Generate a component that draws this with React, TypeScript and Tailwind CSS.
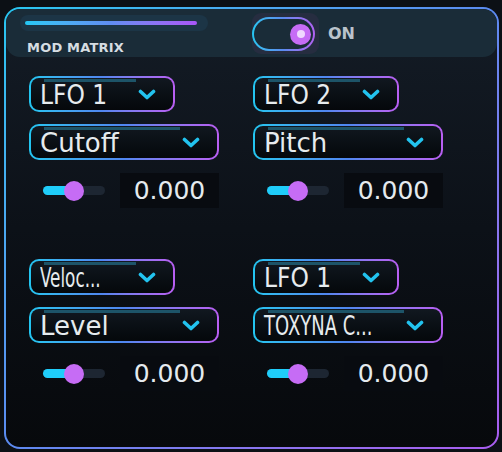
import React from 'react';

type Slot = {
  source: string;
  target: string;
  sourceFit?: string;
  targetFit?: string;
  value: string;
};

// Labels that don't fit get squeezed horizontally, like a fitted-text draw.
const slots: Slot[][] = [
  [
    { source: 'LFO 1', target: 'Cutoff', value: '0.000' },
    { source: 'Veloc...', target: 'Level', sourceFit: 'scale-x-[0.72]', value: '0.000' },
  ],
  [
    { source: 'LFO 2', target: 'Pitch', value: '0.000' },
    { source: 'LFO 1', target: 'TOXYNA C...', targetFit: 'scale-x-[0.77]', value: '0.000' },
  ],
];

const Chevron: React.FC = () => (
  <svg width="18" height="11" viewBox="0 0 18 11" fill="none" className="shrink-0 ml-auto">
    <polyline
      points="2.5,2.5 9,8.5 15.5,2.5"
      stroke="#22c3ef"
      strokeWidth="3.6"
      strokeLinecap="round"
      strokeLinejoin="round"
    />
  </svg>
);

const Select: React.FC<{ label: string; wide?: boolean; fit?: string }> = ({ label, wide, fit }) => (
  <div
    className={`h-[36px] p-[2px] rounded-[10px] bg-gradient-to-r from-[#22c5f0] via-[#4f86f0] to-[#b85ef2] ${
      wide ? 'w-[190px]' : 'w-[146px]'
    }`}
  >
    <div className="relative h-full rounded-[8px] bg-gradient-to-b from-[#111820] to-[#05080b] flex items-center pl-[9px] pr-[17px]">
      <div className="absolute top-[1px] left-[13px] right-[37px] h-[3px] bg-[#1d5468]" />
      <span
        className={`text-[26px] leading-[26px] pt-[1px] text-[#e6ebee] whitespace-nowrap origin-left ${
          wide && !fit
            ? "font-['DejaVu_Sans',sans-serif]"
            : "font-['DejaVu_Sans_Condensed','DejaVu_Sans',sans-serif] font-stretch-condensed"
        } ${fit ?? ''}`}
      >
        {label}
      </span>
      <Chevron />
    </div>
  </div>
);

const AmountRow: React.FC<{ value: string; pos: number }> = ({ value, pos }) => (
  <div className="h-[35px] flex items-center">
    <div className="relative ml-[14px] w-[62px] h-[9px] rounded-full bg-[#1d2632]">
      <div className="h-full rounded-full bg-[#1fcdfa]" style={{ width: pos }} />
      <div
        className="absolute top-1/2 w-[20px] h-[20px] -mt-[10px] -ml-[10px] rounded-full bg-[#c66cf5]"
        style={{ left: pos }}
      />
    </div>
    <div className="ml-[15px] w-[99px] h-[35px] bg-[#080b10] flex items-center justify-center">
      <span className="text-[25px] leading-none text-[#e4eaee] font-['DejaVu_Sans',sans-serif]">{value}</span>
    </div>
  </div>
);

const SlotGroup: React.FC<{ slot: Slot }> = ({ slot }) => (
  <div className="flex flex-col">
    <Select label={slot.source} fit={slot.sourceFit} />
    <div className="mt-[12px]">
      <Select label={slot.target} wide fit={slot.targetFit} />
    </div>
    <div className="mt-[13px]">
      <AmountRow value={slot.value} pos={31} />
    </div>
  </div>
);

export default function App() {
  return (
    <div className="w-[502px] h-[452px] bg-[#0c1015] pt-[7px] pl-[4px] font-['DejaVu_Sans',sans-serif]">
      <div className="w-[495px] h-[442px] p-[2px] rounded-[16px] bg-gradient-to-br from-[#26c6f0] via-[#5b8af0] to-[#a95cf0]">
        <div className="h-full rounded-[14px] bg-gradient-to-b from-[#141c26] via-[#0c1118] to-[#07090c] flex flex-col overflow-hidden">
          {/* header */}
          <div className="h-[48px] shrink-0 rounded-[14px] bg-[#1a2c38] flex items-start px-[14px]">
            <div className="w-[188px]">
              <div className="mt-[6px] h-[16px] rounded-full bg-[#1c3546] flex items-center pl-[5px] pr-[11px]">
                <div className="h-[4px] w-full rounded-full bg-gradient-to-r from-[#22c8f5] via-[#5f8df2] to-[#a855f7]" />
              </div>
              <div className="mt-[9px] pl-[7px] text-[13px] leading-[16px] font-bold text-[#d6dde2] tracking-[0.2px]">
                MOD MATRIX
              </div>
            </div>
            <div className="ml-[44px] mt-[4px] flex items-center">
              <div className="w-[67px] h-[41px] rounded-[9px] bg-[#262d40] pt-[4px]">
                <div className="w-[63px] h-[34px] p-[2px] rounded-full bg-gradient-to-r from-[#22c5f0] via-[#5a8af0] to-[#b060f2]">
                  <div className="h-full rounded-full bg-[#1a2c38] flex items-center justify-end pr-[2px]">
                    <div className="w-[21px] h-[21px] rounded-full bg-[#c66cf5] flex items-center justify-center">
                      <div className="w-[8px] h-[8px] rounded-full bg-[#f0d9ff]" />
                    </div>
                  </div>
                </div>
              </div>
              <span className="ml-[9px] text-[16px] font-bold text-[#b9c3cb]">ON</span>
            </div>
          </div>

          {/* slots */}
          <div className="flex gap-x-[34px] pl-[23px] pt-[19px]">
            {slots.map((col, i) => (
              <div key={i} className="w-[190px] flex flex-col gap-y-[51px]">
                {col.map((slot, j) => (
                  <SlotGroup key={j} slot={slot} />
                ))}
              </div>
            ))}
          </div>
        </div>
      </div>
    </div>
  );
}
